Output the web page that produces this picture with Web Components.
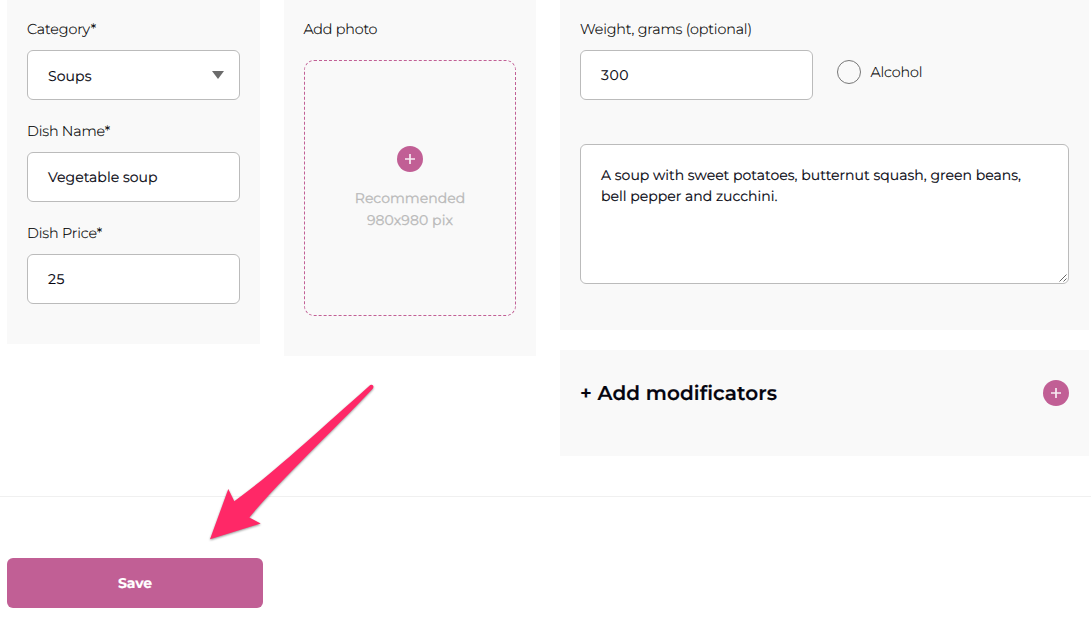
<!DOCTYPE html>
<html lang="en">
<head>
<meta charset="utf-8">
<title>Dish editor</title>
<style>
html,body{margin:0;height:100%;overflow:hidden;background:#fff}
body{font-family:Montserrat,Inter,"Open Sans",sans-serif;font-size:14px;color:#05050f;text-rendering:geometricPrecision;-webkit-text-stroke-width:.15px}
</style>
</head>
<body>
<dish-editor></dish-editor>
<script>
const define = (name, html, init) => {
  const tpl = document.createElement('template');
  tpl.innerHTML = html;
  customElements.define(name, class extends HTMLElement {
    constructor() {
      super();
      this.attachShadow({mode: 'open'}).append(tpl.content.cloneNode(true));
    }
    connectedCallback() { if (init) init.call(this, this.shadowRoot); }
  });
};

// One line of text, tracked so that it sets to the given measure in pixels.
define('tracked-text', `<style>
:host{display:block;white-space:nowrap}
span{display:inline-block}
</style><span><slot></slot></span>`, function (root) {
  const span = root.querySelector('span');
  const measure = +this.getAttribute('measure');
  const n = this.textContent.length;
  span.style.letterSpacing = '0';
  const gap = (measure - span.getBoundingClientRect().width) / (n - 1);
  span.style.letterSpacing = gap.toFixed(3) + 'px';
  span.style.marginRight = (-gap).toFixed(3) + 'px';
});

define('plus-button', `<style>
:host{display:block;width:26px;height:26px;flex:none}
svg{display:block}
</style><svg width="26" height="26" viewBox="0 0 26 26"><circle cx="13" cy="13" r="13" fill="#c15f95"/><path d="M8 13h10M13 8v10" stroke="#fff" stroke-opacity=".88" stroke-width="1.7"/></svg>`);

define('grey-panel', `<style>
:host{display:block;background:#f9f9f9;box-sizing:border-box;padding:20px}
</style><slot></slot>`);

define('form-field', `<style>
:host{display:block}
.label{height:18px;line-height:18px;font-weight:300;font-size:14.3px;color:#000}
.box{margin-top:12px;box-sizing:border-box;height:50px;border:1px solid #bbb;border-radius:6px;background:#fff;display:flex;align-items:center;justify-content:space-between;padding:0 15px 0 20px}
</style><div class="label"><slot name="label"></slot></div><div class="box"><slot></slot><slot name="icon"></slot></div>`);

define('select-arrow', `<style>
:host{display:block;width:12px;height:8px}
svg{display:block}
</style><svg width="12" height="8"><path d="M0 0h12L6 8z" fill="#6b6b6b"/></svg>`);

define('photo-drop', `<style>
:host{display:flex;flex-direction:column;align-items:center;box-sizing:border-box;height:256px;border:1px dashed #c15f95;border-radius:10px;padding-top:85px;color:#bababa;line-height:22px}
.hint{margin-top:15px;display:flex;flex-direction:column;align-items:center;-webkit-text-stroke-width:.3px}
</style><plus-button></plus-button><div class="hint"><slot></slot></div>`);

define('radio-option', `<style>
:host{display:flex;align-items:center;gap:9.5px;font-weight:300;font-size:14.3px;color:#000}
i{width:22px;height:22px;border:1px solid #777;border-radius:50%}
</style><i></i><slot></slot>`);

define('text-area', `<style>
:host{display:block;position:relative;box-sizing:border-box;height:140px;border:1px solid #bbb;border-radius:6px;background:#fff;padding:20px;line-height:21px}
svg{position:absolute;right:1px;bottom:1px}
</style><slot></slot><svg width="8" height="8"><path d="M.5 7.5l7-7M4.5 7.5l3-3" stroke="#555" stroke-width=".9"/></svg>`);

define('save-button', `<style>
:host{display:flex;align-items:center;justify-content:center;width:256px;height:50px;border-radius:6px;background:#c15f95;color:#fff;font-weight:700}
</style><slot></slot>`);

define('pointer-arrow', `<style>
:host{display:block;position:absolute;left:200px;top:375px}
svg{display:block;filter:drop-shadow(.8px 1.8px 1.1px rgba(0,0,0,.42))}
</style><svg width="185" height="175" viewBox="200 375 185 175"><path fill="#ff2867" d="M210 539.3L228.3 489L234.3 501.3C270 476 315 434 370.3 385.1Q372.2 384.3 373.3 386Q373.7 387.6 372.7 388.7C330 434 281 479 249.3 517.4L260.7 523.5Z"/></svg>`);

define('dish-editor', `<style>
:host{display:block;position:relative;height:629px}
.columns{display:grid;grid-template-columns:253px 252px 529px;column-gap:24px;align-items:start;padding-left:7px;height:496px;box-sizing:border-box}
.category{height:344px;display:flex;flex-direction:column;gap:22px}
.chosen{padding-top:2px}
.photo{height:356px}
.photo .label{line-height:18px;margin:0 0 22px -.5px;font-weight:300;font-size:14.3px;color:#000}
.details{display:grid;gap:20px}
.info{height:330px}
.row{display:flex;gap:24px;align-items:flex-start;margin-bottom:44px}
.row form-field{width:233px}
.row radio-option{margin-top:40px}
.mods{height:106px;padding-top:30px;display:flex;justify-content:space-between;align-items:flex-start;font-size:20px;font-weight:600;line-height:26px}
.mods tracked-text{padding-top:1px}
footer{border-top:1px solid #f0f0f0;padding:61px 7px 0}
</style>
<div class="columns">
  <grey-panel class="category">
    <form-field><tracked-text slot="label" measure="69">Category*</tracked-text><tracked-text class="chosen" measure="43.5">Soups</tracked-text><select-arrow slot="icon"></select-arrow></form-field>
    <form-field><tracked-text slot="label" measure="83">Dish Name*</tracked-text><tracked-text measure="109.5">Vegetable soup</tracked-text></form-field>
    <form-field><tracked-text slot="label" measure="75">Dish Price*</tracked-text><tracked-text measure="16.5">25</tracked-text></form-field>
  </grey-panel>
  <grey-panel class="photo">
    <tracked-text class="label" measure="74">Add photo</tracked-text>
    <photo-drop><tracked-text measure="110.5">Recommended</tracked-text><tracked-text measure="86">980x980 pix</tracked-text></photo-drop>
  </grey-panel>
  <div class="details">
    <grey-panel class="info">
      <div class="row">
        <form-field><tracked-text slot="label" measure="172">Weight, grams (optional)</tracked-text><tracked-text measure="27.5">300</tracked-text></form-field>
        <radio-option><tracked-text measure="52">Alcohol</tracked-text></radio-option>
      </div>
      <text-area><tracked-text measure="420">A soup with sweet potatoes, butternut squash, green beans,</tracked-text><tracked-text measure="176.5">bell pepper and zucchini.</tracked-text></text-area>
    </grey-panel>
    <grey-panel class="mods"><tracked-text measure="197">+ Add modificators</tracked-text><plus-button></plus-button></grey-panel>
  </div>
</div>
<footer><save-button><tracked-text measure="34">Save</tracked-text></save-button></footer>
<pointer-arrow></pointer-arrow>`);
</script>
</body>
</html>
